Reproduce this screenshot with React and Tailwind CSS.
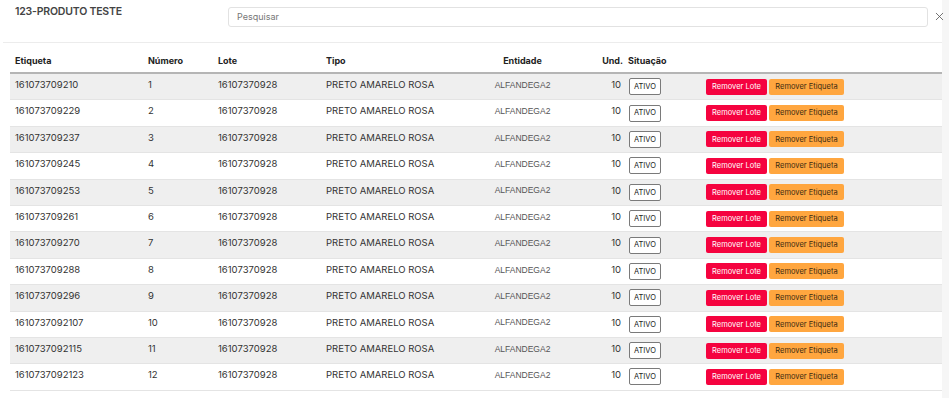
import { X } from "lucide-react";

const rows = [
  ["161073709210", "1"],
  ["161073709229", "2"],
  ["161073709237", "3"],
  ["161073709245", "4"],
  ["161073709253", "5"],
  ["161073709261", "6"],
  ["161073709270", "7"],
  ["161073709288", "8"],
  ["161073709296", "9"],
  ["1610737092107", "10"],
  ["1610737092115", "11"],
  ["1610737092123", "12"],
];

const cols = "grid grid-cols-[133px_70px_108px_149px_105px_49px_82px_1fr]";

export default function App() {
  return (
    <div
      className="relative w-[949px] h-[398px] overflow-hidden bg-white text-[#333]"
      style={{ fontFamily: "Inter, 'Noto Sans', sans-serif" }}
    >
      {/* scrollbar strip */}
      <div className="absolute right-0 top-0 bottom-0 w-[7px] bg-[#f6f6f6]" />

      {/* Header */}
      <div className="relative z-10 flex items-start h-[42px] pl-[15px]">
        <h1 className="w-[213px] pt-[4px] text-[10.5px] font-semibold text-[#444] tracking-[-0.2px]">
          123-PRODUTO TESTE
        </h1>
        <div className="mt-[7px] w-[700px] h-[20px] border border-[#e2e2e2] rounded-[3px] flex items-center pl-[8px] text-[9px] text-[#777]">
          Pesquisar
        </div>
        <X className="mt-[10px] ml-[5px] w-[13px] h-[13px] text-[#555]" strokeWidth={1.5} />
      </div>
      <div className="ml-[3px] w-[939px] h-px bg-[#ececec]" />

      {/* Table */}
      <div className="ml-[10px] w-[932px] mt-[9px]">
        <div className={`${cols} h-[22px] items-center border-b-2 border-[#b5b5b5] text-[9px] font-bold text-[#222] pb-[2px]`}>
          <div className="pl-[5px]">Etiqueta</div>
          <div className="pl-[5px]">Número</div>
          <div className="pl-[5px]">Lote</div>
          <div className="pl-[5px]">Tipo</div>
          <div className="text-center">Entidade</div>
          <div className="text-right pr-[1px]">Und.</div>
          <div className="pl-[4px]">Situação</div>
          <div />
        </div>
        {rows.map(([etiqueta, numero], i) => (
          <div
            key={etiqueta}
            className={`${cols} h-[26.4px] items-center border-b border-[#e4e4e4] text-[9.5px] ${
              i % 2 === 0 ? "bg-[#efefef]" : "bg-white"
            }`}
          >
            <div className="pl-[5px] pb-[3px]">{etiqueta}</div>
            <div className="pl-[5px] pb-[3px]">{numero}</div>
            <div className="pl-[5px] pb-[3px]">16107370928</div>
            <div className="pl-[5px] pb-[3px]">PRETO AMARELO ROSA</div>
            <div
              className="text-center pb-[3px] text-[8.5px] text-[#555]"
              style={{ fontFamily: "'Liberation Sans', Arial, sans-serif" }}
            >
              ALFANDEGA2
            </div>
            <div className="text-right pr-[3px] pb-[3px]">10</div>
            <div className="pl-[5px]">
              <span className="inline-flex items-center justify-center w-[32px] h-[17px] border border-[#7a7a7a] rounded-[2px] bg-white text-[7.5px] text-[#222]">
                ATIVO
              </span>
            </div>
            <div className="flex gap-[2px]">
              <button className="w-[61px] h-[16px] rounded-[2px] bg-[#f5033f] text-white text-[7.5px]">
                Remover Lote
              </button>
              <button className="w-[75px] h-[16px] rounded-[2px] bg-[#ffa63f] text-[#3b2a12] text-[7.5px]">
                Remover Etiqueta
              </button>
            </div>
          </div>
        ))}
      </div>
    </div>
  );
}
